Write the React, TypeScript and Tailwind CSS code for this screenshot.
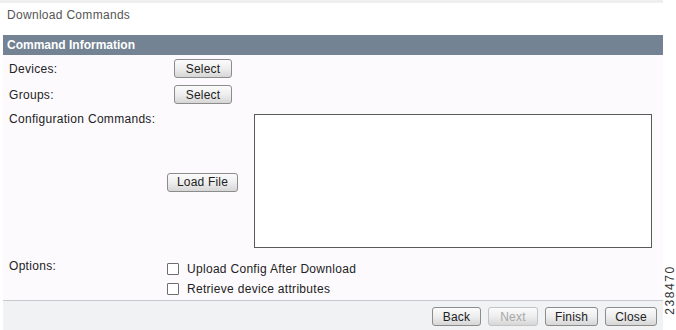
import React from "react";

function Btn({
  label,
  width,
  disabled,
}: {
  label: string;
  width: string;
  disabled?: boolean;
}) {
  return (
    <button
      className={`h-[19px] ${width} rounded-[3px] border text-[12px] leading-none tracking-[0.2px] bg-gradient-to-b from-[#fbfbfb] via-[#eeeeee] to-[#d6d6d6] ${
        disabled
          ? "border-[#c4c4c4] text-[#a8a8a8]"
          : "border-[#8c8c8c] text-[#222222]"
      }`}
      disabled={disabled}
    >
      {label}
    </button>
  );
}

function Check({ label }: { label: string }) {
  return (
    <label className="flex items-center h-[20px]">
      <span className="w-[12px] h-[12px] border border-[#6e6e6e] bg-white rounded-[1px]" />
      <span className="ml-[8px] text-[12px] tracking-[0.3px] text-[#222222]">{label}</span>
    </label>
  );
}

export default function App() {
  return (
    <div className="relative w-[676px] h-[330px] bg-white overflow-hidden font-['Liberation_Sans',Arial,sans-serif]">
      <div className="h-[3px] w-[663px] bg-[#efefef]" />
      <div className="h-[32px] pl-[7px] pt-[3px] text-[12px] tracking-[0.3px] text-[#555555]">
        Download Commands
      </div>

      <div className="ml-[3px] w-[660px]">
        <div className="h-[20px] bg-[#738394] pl-[4px] flex items-center text-[12px] font-bold text-white">
          Command Information
        </div>

        <div className="h-[245px] bg-[#fdfafe] pt-[4px] text-[12px] tracking-[0.3px] text-[#222222]">
          <div className="flex items-center h-[19px]">
            <div className="w-[171px] pl-[6px]">Devices:</div>
            <Btn label="Select" width="w-[58px]" />
          </div>
          <div className="flex items-center h-[19px] mt-[7px]">
            <div className="w-[171px] pl-[6px]">Groups:</div>
            <Btn label="Select" width="w-[58px]" />
          </div>

          <div className="flex mt-[10px] h-[134px]">
            <div className="w-[164px] pl-[6px] -mt-[4px]">Configuration Commands:</div>
            <div className="w-[87px] flex items-center pt-[2px]">
              <Btn label="Load File" width="w-[71px]" />
            </div>
            <textarea className="w-[398px] h-[134px] border border-[#5a5a5a] bg-white resize-none outline-none" />
          </div>

          <div className="flex mt-[11px]">
            <div className="w-[164px] pl-[6px] -mt-[2px]">Options:</div>
            <div className="flex flex-col">
              <Check label="Upload Config After Download" />
              <Check label="Retrieve device attributes" />
            </div>
          </div>
        </div>

        <div className="h-[30px] border-t border-[#c6cacd] bg-[#f0f2f3] flex items-center justify-end gap-[7px] pr-[6px] pt-[2px]">
          <Btn label="Back" width="w-[49px]" />
          <Btn label="Next" width="w-[50px]" disabled />
          <Btn label="Finish" width="w-[53px]" />
          <Btn label="Close" width="w-[52px]" />
        </div>
      </div>

      <div className="absolute left-[641px] top-[284px] w-[58px] h-[12px] -rotate-90 text-center text-[12px] leading-[12px] text-[#333333] tracking-[1.6px]">
        238470
      </div>
    </div>
  );
}
